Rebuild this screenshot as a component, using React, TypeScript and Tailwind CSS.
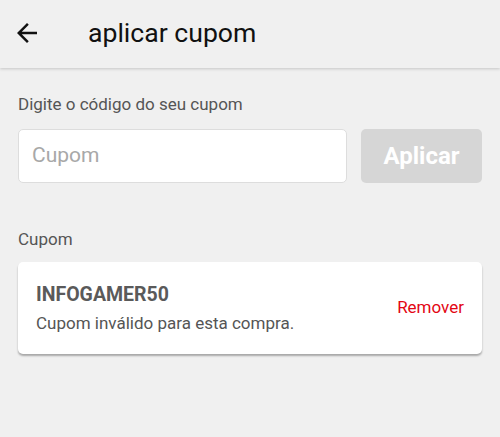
import React from "react";

export default function App() {
  return (
    <div
      className="w-[500px] h-[437px] bg-[#f0f0f0] overflow-hidden"
      style={{ fontFamily: "Roboto, 'Liberation Sans', sans-serif" }}
    >
      {/* Header */}
      <div className="h-[68px] flex items-center bg-[#f0f0f0] shadow-[0_1px_3px_rgba(0,0,0,0.18)] relative">
        <div className="w-[30px] ml-[12px] -mt-[2px]">
          <svg width="30" height="30" viewBox="0 0 24 24" fill="#111">
            <path d="M20 11H7.83l5.59-5.59L12 4l-8 8 8 8 1.41-1.41L7.83 13H20v-2z" />
          </svg>
        </div>
        <h1 className="ml-[46px] -mt-[2px] text-[26.6px] text-[#111] leading-none">aplicar cupom</h1>
      </div>

      {/* Form */}
      <div className="px-[18px]">
        <p className="mt-[26px] text-[17px] text-[#555] leading-5">Digite o código do seu cupom</p>
        <div className="mt-[15px] flex gap-[14px]">
          <div className="w-[329px] h-[54px] bg-white border border-[#dddddd] rounded-[5px] flex items-center px-[13px]">
            <span className="text-[21px] text-[#a8a8a8]">Cupom</span>
          </div>
          <div className="w-[121px] h-[54px] bg-[#d6d6d6] rounded-[5px] flex items-center justify-center">
            <span className="text-[24px] font-bold text-white">Aplicar</span>
          </div>
        </div>

        <p className="mt-[46px] text-[17px] text-[#555] leading-5">Cupom</p>

        {/* Card */}
        <div className="mt-[13px] h-[92px] bg-white rounded-[5px] shadow-[0_2px_2px_rgba(0,0,0,0.3)] flex items-center justify-between pl-[18px] pr-[18px]">
          <div>
            <p className="text-[19.5px] font-bold text-[#5a5a5a] leading-6">INFOGAMER50</p>
            <p className="mt-[6px] text-[17px] text-[#555] leading-5">Cupom inválido para esta compra.</p>
          </div>
          <span className="text-[17px] text-[#e30613]">Remover</span>
        </div>
      </div>
    </div>
  );
}
